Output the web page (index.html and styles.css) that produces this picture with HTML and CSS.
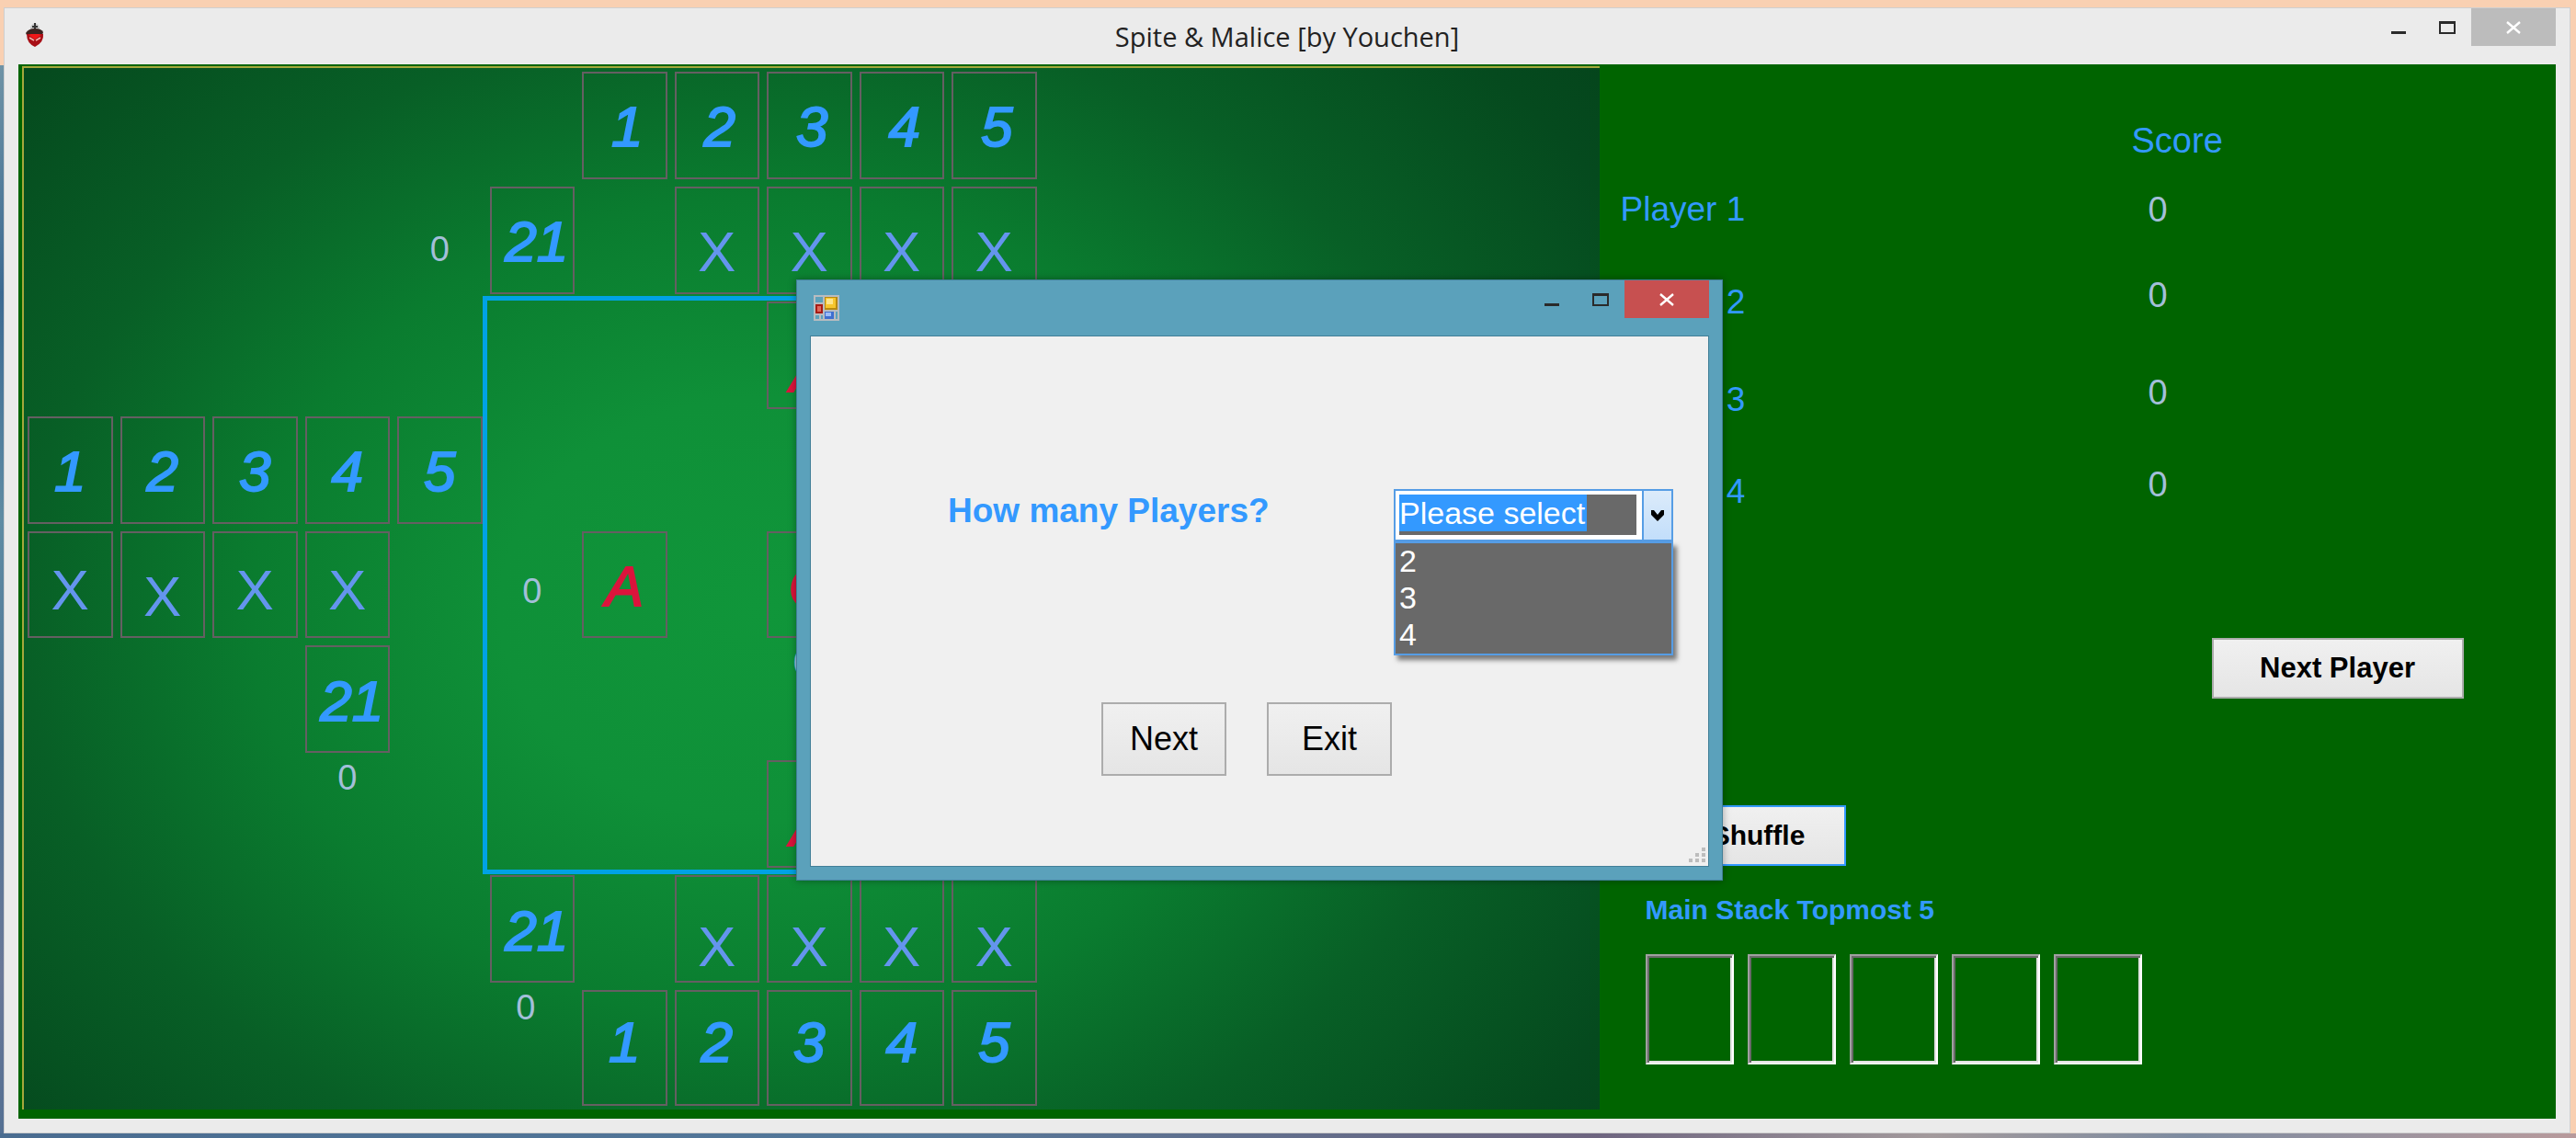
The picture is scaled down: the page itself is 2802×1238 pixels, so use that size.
FILE: index.html
```html
<!DOCTYPE html>
<html lang="en">
<head>
<meta charset="utf-8">
<title>Spite &amp; Malice [by Youchen]</title>
<link rel="stylesheet" href="styles.css">
</head>
<body>
<div class="window">
  <header class="titlebar">
    <svg class="app-icon" viewBox="0 0 20 26" aria-hidden="true">
      <path d="M5 8Q4 2 10 0Q16 2 15 8Z" fill="#c9c9c9"/>
      <path d="M10 0v7M7 4h6" stroke="#333" stroke-width="2"/>
      <path d="M0 11Q3 6 10 6Q17 6 19 10L18 13H1Z" fill="#3c2420"/>
      <path d="M1 12H19Q20 21 10 26Q1 22 1 12Z" fill="#a80f16"/>
      <path d="M3 13L10 18L17 13L14 12H6Z" fill="#f01818"/>
      <path d="M4 16L9 19M16 16L11 19" stroke="#f3b0a8" stroke-width="1.5"/>
    </svg>
    <h1 class="title">Spite &amp; Malice [by Youchen]</h1>
    <div class="controls">
      <button class="ctl" aria-label="Minimize"><svg viewBox="0 0 18 14"><path d="M1 11h16v3H1z" fill="#2a2a2a"/></svg></button>
      <button class="ctl" aria-label="Maximize"><svg viewBox="0 0 18 14"><path d="M0 0h18v14H0zM2 3v9h14V3z" fill="#2a2a2a" fill-rule="evenodd"/></svg></button>
      <button class="ctl close" aria-label="Close"><svg viewBox="0 0 18 14"><path d="M2 1L16 13M16 1L2 13" stroke="#fff" stroke-width="2.4"/></svg></button>
    </div>
  </header>

  <main class="client">
    <section class="board">
      <div class="center-box"></div>

      <div class="slot r1 c7"><span class="num">1</span></div>
      <div class="slot r1 c8"><span class="num">2</span></div>
      <div class="slot r1 c9"><span class="num">3</span></div>
      <div class="slot r1 c10"><span class="num">4</span></div>
      <div class="slot r1 c11"><span class="num">5</span></div>

      <div class="count r2 c5">0</div>
      <div class="slot pile r2 c6"><span class="num">21</span></div>
      <div class="slot low r2 c8"><span class="side">X</span></div>
      <div class="slot low r2 c9"><span class="side">X</span></div>
      <div class="slot low r2 c10"><span class="side">X</span></div>
      <div class="slot low r2 c11"><span class="side">X</span></div>

      <div class="slot lower r3 c9"><span class="num red">A</span></div>

      <div class="slot r4 c1"><span class="num">1</span></div>
      <div class="slot r4 c2"><span class="num">2</span></div>
      <div class="slot r4 c3"><span class="num">3</span></div>
      <div class="slot r4 c4"><span class="num">4</span></div>
      <div class="slot r4 c5"><span class="num">5</span></div>

      <div class="slot mid r5 c1"><span class="side">X</span></div>
      <div class="slot low r5 c2"><span class="side">X</span></div>
      <div class="slot mid r5 c3"><span class="side">X</span></div>
      <div class="slot mid r5 c4"><span class="side">X</span></div>
      <div class="count r5 c6">0</div>
      <div class="slot r5 c7"><span class="num red">A</span></div>
      <div class="slot r5 c9"><span class="num red">C</span></div>

      <div class="slot pile r6 c4"><span class="num">21</span></div>
      <div class="count top r6 c9">0</div>

      <div class="count top r7 c4">0</div>
      <div class="slot low r7 c9"><span class="num red">A</span></div>

      <div class="slot pile r8 c6"><span class="num">21</span></div>
      <div class="slot lower r8 c8"><span class="side">X</span></div>
      <div class="slot lower r8 c9"><span class="side">X</span></div>
      <div class="slot lower r8 c10"><span class="side">X</span></div>
      <div class="slot lower r8 c11"><span class="side">X</span></div>

      <div class="count top r9 c6">0</div>
      <div class="slot r9 c7"><span class="num">1</span></div>
      <div class="slot r9 c8"><span class="num">2</span></div>
      <div class="slot r9 c9"><span class="num">3</span></div>
      <div class="slot r9 c10"><span class="num">4</span></div>
      <div class="slot r9 c11"><span class="num">5</span></div>
    </section>

    <aside class="panel">
      <table class="scores">
        <thead><tr><th></th><th scope="col">Score</th></tr></thead>
        <tbody>
          <tr><th scope="row">Player 1</th><td>0</td></tr>
          <tr><th scope="row">Player 2</th><td>0</td></tr>
          <tr><th scope="row">Player 3</th><td>0</td></tr>
          <tr><th scope="row">Player 4</th><td>0</td></tr>
        </tbody>
      </table>
      <button class="btn next-player">Next Player</button>
      <button class="btn shuffle">Shuffle</button>
      <h2 class="stack-title">Main Stack Topmost 5</h2>
      <div class="stack"><i></i><i></i><i></i><i></i><i></i></div>
    </aside>
  </main>
</div>

<div class="dialog" role="dialog" aria-labelledby="question">
  <header class="dialog-bar">
    <svg class="form-icon" viewBox="0 0 28 28" aria-hidden="true">
      <path d="M0 0h28v28H0z" fill="#b8bcc0"/>
      <path d="M2 2h8v6H2zM2 22h4v4H2zM8 22h2v4H8zM24 18h2v8h-2z" fill="#5ba1bb"/>
      <path d="M2 10h8v10H2z" fill="#a81b14"/><path d="M4 12h4v6H4z" fill="#e0665a"/>
      <path d="M12 2h14v14H12z" fill="#b98a10"/><path d="M13 3h11v11H13z" fill="#f7c62e"/><path d="M14 4h7v6h-7z" fill="#fde58c"/>
      <path d="M12 18h10v8H12z" fill="#3f6fd0"/><path d="M13 19h6v4h-6z" fill="#9dbdf8"/>
    </svg>
    <div class="controls">
      <button class="ctl" aria-label="Minimize"><svg viewBox="0 0 18 14"><path d="M1 11h16v3H1z" fill="#2a2a2a"/></svg></button>
      <button class="ctl" aria-label="Maximize"><svg viewBox="0 0 18 14"><path d="M0 0h18v14H0zM2 3v9h14V3z" fill="#2a2a2a" fill-rule="evenodd"/></svg></button>
      <button class="ctl close" aria-label="Close"><svg viewBox="0 0 18 14"><path d="M2 1L16 13M16 1L2 13" stroke="#fff" stroke-width="2.4"/></svg></button>
    </div>
  </header>
  <form class="dialog-body">
    <div class="field">
      <label id="question" for="players">How many Players?</label>
      <div class="combo">
        <div class="combo-box">
          <input id="players" type="text" value="Please select">
          <button type="button" class="drop" aria-label="Open"><svg viewBox="0 0 14 12"><path d="M0 0h3l4 5l4-5h3v5l-7 7l-7-7z"/></svg></button>
        </div>
        <select class="list" size="3" aria-label="Number of players">
          <option>2</option><option>3</option><option>4</option>
        </select>
      </div>
    </div>
    <div class="actions">
      <button type="button" class="btn">Next</button>
      <button type="button" class="btn">Exit</button>
    </div>
    <svg class="grip" viewBox="0 0 18 16" aria-hidden="true"><path d="M14 0h4v4h-4zM7 6h4v4H7zM14 6h4v4h-4zM0 12h4v4H0zM7 12h4v4H7zM14 12h4v4h-4z" fill="#bdbdbd"/></svg>
  </form>
</div>
</body>
</html>
```
FILE: styles.css
```css
* { box-sizing: border-box; }

body {
  margin: 0;
  min-height: 100vh;
  display: flex;
  padding: 8px 6px 5px 4px;
  font-family: "Liberation Sans", Arial, sans-serif;
  background:
    linear-gradient(90deg, #4a6c90, #54789a 35%, #6e6580 62%, #a39a9c 75%, #7d8ba0 85%, #b89a9c) bottom / 100% 5px no-repeat,
    linear-gradient(#6f93a6, #3c6a92 20%, #5f8ca4 40%, #4d7394 60%, #6a7898 80%, #4a6c90) 0 71px / 4px 100% no-repeat,
    #f9d0b2;
}

button { font-family: inherit; padding: 0; cursor: pointer; }

.window {
  flex: 1;
  display: flex;
  flex-direction: column;
  padding: 0 15px 15px;
  border: 1px solid #cfcfcf;
  background: #ebebeb;
}

/* Title bars */
.titlebar {
  display: grid;
  grid-template-columns: 1fr auto 1fr;
  align-items: start;
  height: 61px;
}
.app-icon { width: 20px; height: 26px; margin: 16px 0 0 8px; }
.title {
  margin: 0;
  font: 400 29px/62px "Open Sans", "Noto Sans", sans-serif;
  color: #222;
}
.controls { display: flex; justify-content: flex-end; }
.ctl {
  display: flex;
  align-items: center;
  justify-content: center;
  width: 53px;
  height: 41px;
  border: 0;
  background: none;
}
.ctl svg { width: 18px; height: 14px; }
.ctl.close { width: 92px; background: #bcbcbc; }

/* Game area */
.client { flex: 1; display: flex; background: #006400; }

.board {
  flex: 1711;
  display: grid;
  grid-template-columns: repeat(17, minmax(0, 1fr));
  grid-template-rows: repeat(8, 125fr) 132fr;
  margin: 2px 0 10px 4px;
  padding: 2px 3px 0 2px;
  border: solid #a5a83c;
  border-width: 2px 0 0 2px;
  background: radial-gradient(ellipse 56% 68% at 47% 52%, #10963a 0, #0f9038 30%, #0a7c2f 58%, #085f26 84%, #054a1e 112%, #043d18 140%);
}

.r1 { grid-row: 1; } .r2 { grid-row: 2; } .r3 { grid-row: 3; }
.r4 { grid-row: 4; } .r5 { grid-row: 5; } .r6 { grid-row: 6; }
.r7 { grid-row: 7; } .r8 { grid-row: 8; } .r9 { grid-row: 9; }
.c1 { grid-column: 1; } .c2 { grid-column: 2; } .c3 { grid-column: 3; }
.c4 { grid-column: 4; } .c5 { grid-column: 5; } .c6 { grid-column: 6; }
.c7 { grid-column: 7; } .c8 { grid-column: 8; } .c9 { grid-column: 9; }
.c10 { grid-column: 10; } .c11 { grid-column: 11; }

.center-box {
  grid-area: 3 / 6 / 8 / 12;
  margin: -4px 0 -1px -6px;
  border: 5px solid #00a2e4;
}

.slot {
  display: flex;
  align-items: center;
  justify-content: center;
  margin: 2px 6px 6px 2px;
  padding-top: 4px;
  border: 2px solid #655f62;
  font-size: 62px;
  line-height: 62px;
}
.slot.mid { padding-top: 12px; }
.slot.low { padding-top: 26px; }
.slot.lower { padding-top: 38px; }
.slot.pile { padding-left: 10px; }
.slot.r1 { padding-left: 6px; }
.slot.r9 { padding: 0 0 12px; margin-bottom: 4px; }
.num {
  color: #39f;
  font-style: italic;
  -webkit-text-stroke: 2px;
}
.side { color: #6495ed; }
.num.red { color: #dc143c; }

.count {
  display: flex;
  align-items: center;
  justify-content: center;
  padding: 16px 4px 0 0;
  font-size: 38px;
  line-height: 42px;
  color: #a3bfd9;
}
.count.r5 { padding-top: 10px; }
.count.top { align-items: flex-start; padding: 0 4px 0 0; }
.count.r6, .count.r9 { padding-right: 18px; }

/* Side panel */
.panel { flex: 1042; display: flex; flex-direction: column; align-items: flex-start; }

.scores {
  width: 720px;
  margin: 52px 0 0 23px;
  border-collapse: collapse;
  font-size: 37px;
  line-height: 40px;
  color: #39f;
}
.scores th { padding: 0; font-weight: 400; text-align: left; }
.scores thead th { width: 556px; height: 62px; font-size: 38px; }
.scores thead th + th { width: 164px; }
.scores tbody tr { height: 98px; }
.scores tbody tr:first-child { height: 88px; }
.scores tbody tr:nth-child(3) { height: 114px; }
.scores tbody tr:last-child { height: 86px; }
.scores tr + tr th { padding-top: 16px; }
.scores td { padding: 0 0 0 18px; font-size: 38px; color: #a3bfd9; }

.btn {
  border: 2px solid #acacac;
  background: linear-gradient(#f0f0f0, #e5e5e5);
  color: #000;
}
.next-player {
  width: 274px;
  height: 66px;
  margin: 124px 0 0 666px;
  font-size: 31px;
  font-weight: 700;
}
.shuffle {
  width: 190px;
  height: 66px;
  margin: 116px 0 0 78px;
  border-color: #39f;
  font-size: 30px;
  font-weight: 700;
}
.stack-title {
  margin: 30px 0 30px 50px;
  font-size: 30px;
  line-height: 36px;
  color: #39f;
}
.stack { display: flex; gap: 15px; margin-left: 50px; }
.stack i {
  width: 96px;
  height: 120px;
  border: 2px solid;
  border-color: #a0a0a0 #fff #fff #a0a0a0;
  box-shadow: inset 2px 2px #696969, inset -2px -2px #e3e3e3;
}

/* Dialog floating over the game */
.dialog {
  position: absolute;
  left: 866px;
  top: 304px;
  width: 1008px;
  padding: 0 14px 14px;
  border: 1px solid #417f98;
  background: #5ba1bb;
  box-shadow: 0 0 8px rgba(0, 0, 0, .35);
}
.dialog-bar { display: flex; justify-content: space-between; height: 60px; }
.dialog-bar .close { background: #c75050; }
.form-icon { width: 28px; height: 28px; margin: 16px 0 0 4px; }

.dialog-body {
  position: relative;
  min-height: 578px;
  padding: 166px 38px 0 149px;
  border: 1px solid #417f98;
  background: #f0f0f0;
}
.field { display: flex; justify-content: space-between; height: 232px; }
.field label { font-size: 37px; line-height: 48px; font-weight: 700; color: #39f; }

.combo { width: 304px; }
.combo-box {
  display: flex;
  height: 57px;
  border: 2px solid #569de5;
  background: #fff;
}
.combo-box input {
  width: 258px;
  height: 44px;
  margin: 4px 6px 0 4px;
  padding: 0 0 4px;
  border: 0;
  background: linear-gradient(#39f, #39f) 0 0 / 204px 40px no-repeat #696969;
  font: 34px/40px "Liberation Sans", Arial, sans-serif;
  color: #fff;
}
.drop {
  display: flex;
  align-items: center;
  justify-content: center;
  flex: 1;
  border: 0;
  border-left: 2px solid #569de5;
  background: linear-gradient(#dcebfa, #c2defb);
}
.drop svg { width: 14px; height: 12px; }
.list {
  display: block;
  width: 304px;
  height: 124px;
  margin: 0;
  padding: 0;
  overflow: hidden;
  appearance: none;
  border: 2px solid #569de5;
  border-radius: 0;
  background: #696969;
  box-shadow: 4px 5px 5px rgba(0, 0, 0, .5);
  font: 34px/40px "Liberation Sans", Arial, sans-serif;
  color: #fff;
}
.list option { height: 40px; min-height: 40px; padding: 0 0 0 4px; color: #fff; }

.actions { display: flex; gap: 44px; padding-left: 167px; }
.actions .btn { width: 136px; height: 80px; font-size: 36px; }

.grip { position: absolute; right: 3px; bottom: 4px; width: 18px; height: 16px; }
```
